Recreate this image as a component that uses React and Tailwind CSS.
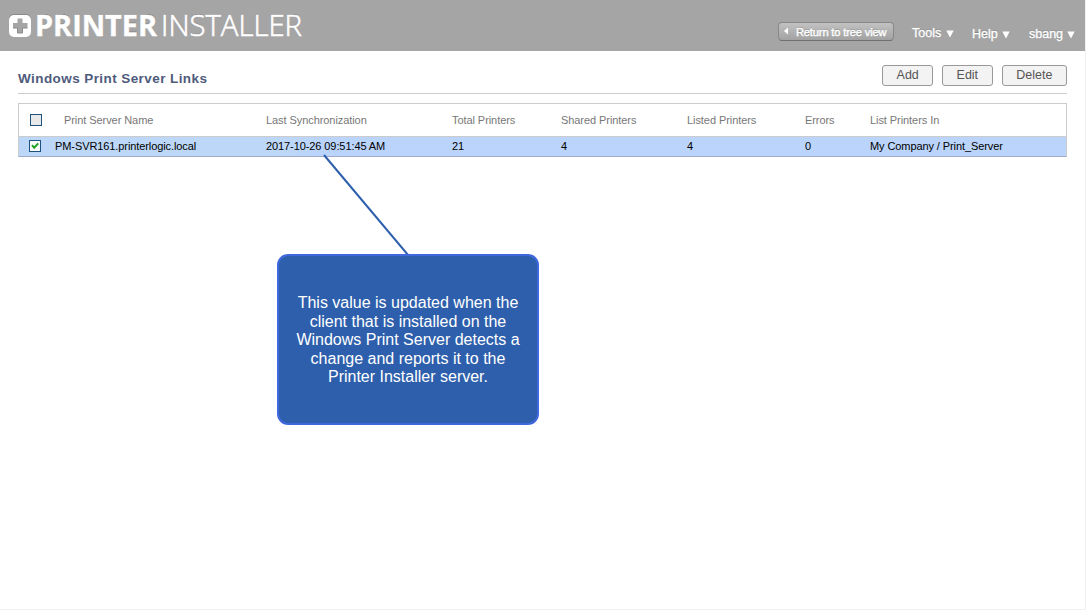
const columns =
  "grid grid-cols-[36px_211px_186px_109px_126px_118px_65px_1fr] items-center";

function Logo() {
  return (
    <svg width="310" height="51" viewBox="0 0 310 51" className="shrink-0" role="img">
      <rect x="9" y="14" width="22" height="22" rx="5" fill="#8a8a8a" />
      <text x="35" y="35" fill="#858585" textLength="122" lengthAdjust="spacingAndGlyphs" className="font-['Open_Sans',sans-serif] text-[28.5px] font-bold" aria-hidden="true">PRINTER</text>
      <rect x="9" y="15" width="22" height="22" rx="5" fill="#fff" />
      <path d="M17.500 18.500h5V23h5v5h-5v5h-5v-5H13v-5h4.500z" fill="#a5a5a5" />
      <path d="M13 28h4.500v5h5v-5h5" fill="none" stroke="#8a8a8a" />
      <text x="35" y="36" fill="#fff" stroke="#fff" strokeWidth="0.4" textLength="122" lengthAdjust="spacingAndGlyphs" className="font-['Open_Sans',sans-serif] text-[28.5px] font-bold">PRINTER</text>
      <text x="161" y="35" fill="#909090" textLength="141" lengthAdjust="spacingAndGlyphs" className="font-['Open_Sans',sans-serif] text-[28.5px] font-light" aria-hidden="true">INSTALLER</text>
      <text x="161" y="36" fill="#fff" stroke="#fff" strokeWidth="0.6" textLength="141" lengthAdjust="spacingAndGlyphs" className="font-['Open_Sans',sans-serif] text-[28.5px] font-light">INSTALLER</text>
    </svg>
  );
}

function MenuItem({ label, className }) {
  return (
    <button className={`flex h-4 items-center justify-between text-[12.5px] leading-4 text-white [text-shadow:0_-1px_0_#858585] [-webkit-text-stroke:0.3px_white] ${className}`}>
      {label}
      <svg width="8" height="8" viewBox="0 0 8 8" className="mt-0.5">
        <path d="M0.300 0.500h7.400L4 7.500z" fill="#fff" />
      </svg>
    </button>
  );
}

function ActionButton({ label, className }) {
  return (
    <button className={`h-[21px] rounded-[3px] border border-[#999] bg-[#f3f3f3] pb-0.5 text-[12px] leading-[17px] text-[#555] ${className}`}>
      <span className="inline-block origin-center translate-y-px scale-x-[1.04] scale-y-[1.12]">{label}</span>
    </button>
  );
}

function Checkbox({ checked = false, className }) {
  return (
    <svg width="12" height="12" viewBox="0 0 12 12" className={className}>
      <rect x="0.500" y="0.500" width="11" height="11" fill={checked ? "#fafafa" : "#e9e9e9"} stroke="#1c5180" />
      {checked && <path d="M3 5.200l2.200 2.500L9.200 3.400" fill="none" stroke="#21a121" strokeWidth="2" />}
    </svg>
  );
}

function Callout() {
  return (
    <>
      <svg width="90" height="103" viewBox="0 0 90 103" className="absolute left-[320px] top-[152px]">
        <path d="M4 3l84 100" stroke="#2e5fac" strokeWidth="2" />
      </svg>
      <div className="absolute left-[277px] top-[254px] flex h-[171px] w-[262px] items-center justify-center rounded-[11px] border-2 border-[#3f68df] bg-[#2e5fac] pt-0.5 text-center text-[16px] leading-[18.5px] text-white">
        <p>
          <span className="block">This value is updated when the</span>
          <span className="block">client that is installed on the</span>
          <span className="block">Windows Print Server detects a</span>
          <span className="block">change and reports it to the</span>
          <span className="block">Printer Installer server.</span>
        </p>
      </div>
    </>
  );
}

export default function App() {
  return (
    <div className="relative flex h-[610px] w-[1086px] flex-col border-b border-r border-[#f0f0f0] bg-white font-['Liberation_Sans',Arial,sans-serif]">
      <header className="flex h-[51px] shrink-0 items-start bg-[#a5a5a5]">
        <Logo />
        <nav className="ml-auto flex items-start pr-2.5">
          <button className="mt-[22px] flex h-[19px] w-[116px] items-center rounded-[4px] border border-[#888] border-b-[#707070] bg-linear-to-b from-[#c2c2c2] to-[#a2a2a2] pl-[5px] text-[11px] leading-4 text-white">
            <svg width="4" height="8" viewBox="0 0 4 8" className="mr-2 -mt-0.5">
              <path d="M4 0.500v7L0 4z" fill="#fff" />
            </svg>
            <span className="whitespace-nowrap tracking-[-0.1px] [-webkit-text-stroke:0.4px_white] [text-shadow:0_-1px_0_#888]">Return to tree view</span>
          </button>
          <MenuItem label="Tools" className="ml-[18px] mt-[25px] w-[42px]" />
          <MenuItem label="Help" className="ml-[18px] mt-[26px] w-[38px]" />
          <MenuItem label="sbang" className="ml-[19px] mt-[26px] w-[46px]" />
        </nav>
      </header>

      <main className="flex flex-col pl-[18px] pr-[18px]">
        <div className="flex h-[43px] items-start border-b border-[#ccc]">
          <h1 className="mt-[19px] text-[13.5px] font-bold leading-[18px] tracking-[0.42px] text-[#4f5b7c]">Windows Print Server Links</h1>
          <div className="ml-auto mt-3.5 flex gap-[9px]">
            <ActionButton label="Add" className="w-[51px]" />
            <ActionButton label="Edit" className="w-[51px]" />
            <ActionButton label="Delete" className="w-[65px]" />
          </div>
        </div>

        <section className="mt-[9px] border border-[#ccc] border-b-[#9fabc8] text-[11px] leading-4">
          <div className={`${columns} h-8 tracking-[-0.07px] text-[#777]`}>
            <Checkbox className="ml-[11px]" />
            <span className="pl-[9px]">Print Server Name</span>
            <span>Last Synchronization</span>
            <span>Total Printers</span>
            <span>Shared Printers</span>
            <span>Listed Printers</span>
            <span>Errors</span>
            <span>List Printers In</span>
          </div>
          <div className={`${columns} h-5 border-t border-[#ccc] bg-[linear-gradient(to_right,#bcd7f7_0px,#bcd7f7_270px,#bbd4fc_300px)] pb-0.5 tracking-[-0.09px] text-black`}>
            <Checkbox checked className="ml-2.5" />
            <span>PM-SVR161.printerlogic.local</span>
            <span>2017-10-26 09:51:45 AM</span>
            <span>21</span>
            <span>4</span>
            <span>4</span>
            <span>0</span>
            <span>My Company / Print_Server</span>
          </div>
        </section>
      </main>

      <Callout />
    </div>
  );
}
